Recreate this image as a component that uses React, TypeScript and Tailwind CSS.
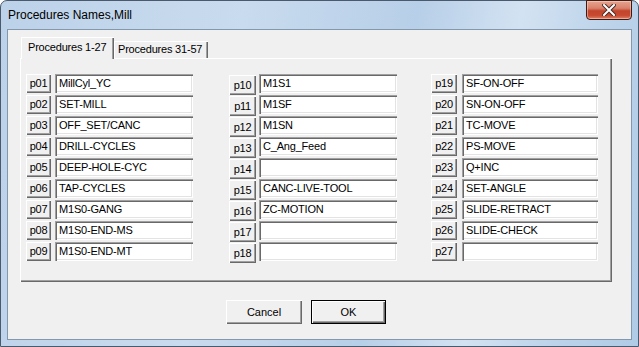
import React from "react";

const col1: [string, string][] = [
  ["p01", "MillCyl_YC"],
  ["p02", "SET-MILL"],
  ["p03", "OFF_SET/CANC"],
  ["p04", "DRILL-CYCLES"],
  ["p05", "DEEP-HOLE-CYC"],
  ["p06", "TAP-CYCLES"],
  ["p07", "M1S0-GANG"],
  ["p08", "M1S0-END-MS"],
  ["p09", "M1S0-END-MT"],
];
const col2: [string, string][] = [
  ["p10", "M1S1"],
  ["p11", "M1SF"],
  ["p12", "M1SN"],
  ["p13", "C_Ang_Feed"],
  ["p14", ""],
  ["p15", "CANC-LIVE-TOOL"],
  ["p16", "ZC-MOTION"],
  ["p17", ""],
  ["p18", ""],
];
const col3: [string, string][] = [
  ["p19", "SF-ON-OFF"],
  ["p20", "SN-ON-OFF"],
  ["p21", "TC-MOVE"],
  ["p22", "PS-MOVE"],
  ["p23", "Q+INC"],
  ["p24", "SET-ANGLE"],
  ["p25", "SLIDE-RETRACT"],
  ["p26", "SLIDE-CHECK"],
  ["p27", ""],
];

const raised =
  "bg-[#f0f0f0] shadow-[inset_1px_1px_0_#ffffff,inset_-1px_-1px_0_#696969,inset_-2px_-2px_0_#a0a0a0]";
const sunken =
  "bg-white shadow-[inset_1px_1px_0_#a0a0a0,inset_2px_2px_0_#696969,inset_-1px_-1px_0_#ffffff,inset_-2px_-2px_0_#e3e3e3]";

function Column({
  rows,
  btnW,
  gap,
  boxW,
  variant,
}: {
  rows: [string, string][];
  btnW: string;
  gap: string;
  boxW: string;
  variant: number;
}) {
  return (
    <div className="flex flex-col gap-[2px]">
      {rows.map(([k, v]) => (
        <div key={k} className={`flex h-[19px] ${gap}`}>
          {variant === 2 ? (
            <div
              className={`${btnW} h-[20px] mt-[1px] ${raised} flex items-center justify-center text-[11px] leading-none text-black tracking-[-0.3px] pt-[1px]`}
            >
              {k}
            </div>
          ) : (
            <div
              className={`${btnW} h-[19px] ${raised} flex items-center justify-center text-[11px] leading-none text-black tracking-[-0.3px]`}
            >
              {k}
            </div>
          )}
          <div
            className={`${boxW} h-[19px] ${sunken} flex items-center pl-[4px] text-[11px] leading-none text-black whitespace-nowrap tracking-[-0.2px]`}
          >
            {v}
          </div>
        </div>
      ))}
    </div>
  );
}

export default function App() {
  return (
    <div className="w-[639px] h-[347px] overflow-hidden bg-white font-['Liberation_Sans',Arial,sans-serif]">
      <div className="w-[639px] h-[347px] flex flex-col border border-[#4a5a6c] rounded-t-[7px] bg-[linear-gradient(100deg,#bcd2e9_0%,#c9dbee_35%,#b7cfe8_60%,#d3e2f2_75%,#bcd3ea_88%,#b0cbe6_100%)]">
        {/* title bar */}
        <div className="h-[28px] flex justify-between shrink-0">
          <div className="pl-[7px] pt-[6px] text-[12px] text-black leading-[16px]">
            Procedures Names,Mill
          </div>
          <div className="-mt-px mr-[6px] w-[46px] h-[20px] rounded-b-[4px] border border-[#3d1a14] bg-[linear-gradient(180deg,#e6a48f_0%,#d8826b_40%,#c3442c_55%,#c84a31_80%,#de8168_100%)] flex items-center justify-center shadow-[inset_0_0_0_1px_rgba(255,220,210,0.5)]">
            <svg width="14" height="12" viewBox="0 0 14 12">
              <path
                d="M2 1 L12 11 M12 1 L2 11"
                stroke="#4a2a24"
                strokeWidth="4"
                strokeLinecap="square"
              />
              <path
                d="M2 1 L12 11 M12 1 L2 11"
                stroke="#ffffff"
                strokeWidth="2"
                strokeLinecap="square"
              />
            </svg>
          </div>
        </div>
        {/* client */}
        <div className="mx-[6px] h-[311px] border border-[#8397ad] bg-[#f0f0f0] flex flex-col pl-[12px] pt-[7px]">
          {/* tabs */}
          <div className="flex items-end h-[21px]">
            <div className="relative z-10 ml-[1px] w-[93px] h-[22px] -mb-[1px] bg-[#f0f0f0] shadow-[inset_1px_1px_0_#ffffff,inset_-1px_0_0_#696969,inset_-2px_0_0_#a0a0a0] pl-[7px] pt-[4px] text-[11px] leading-[13px] text-black whitespace-nowrap tracking-[-0.2px]">
              Procedures 1-27
            </div>
            <div className="w-[94px] h-[17px] bg-[#f0f0f0] shadow-[inset_1px_1px_0_#ffffff,inset_-1px_0_0_#696969,inset_-2px_0_0_#a0a0a0] pl-[4px] pt-[2px] text-[11px] leading-[13px] text-black whitespace-nowrap tracking-[-0.2px]">
              Procedures 31-57
            </div>
          </div>
          {/* panel */}
          <div className="w-[592px] h-[224px] bg-[#f0f0f0] shadow-[inset_1px_1px_0_#ffffff,inset_-1px_-1px_0_#696969,inset_-2px_-2px_0_#a0a0a0] flex pl-[6px] pt-[16px]">
            <Column rows={col1} btnW="w-[25px]" gap="gap-[4px]" boxW="w-[138px]" variant={1} />
            <div className="ml-[36px]">
              <Column rows={col2} btnW="w-[27px]" gap="gap-[3px]" boxW="w-[138px]" variant={2} />
            </div>
            <div className="ml-[34px]">
              <Column rows={col3} btnW="w-[26px]" gap="gap-[5px]" boxW="w-[136px]" variant={1} />
            </div>
          </div>
          {/* buttons */}
          <div className="flex pt-[18px] pl-[206px] gap-[9px]">
            <div className={`w-[76px] h-[24px] ${raised} flex items-center justify-center text-[11px] text-black`}>
              Cancel
            </div>
            <div className="w-[75px] h-[24px] border border-black bg-[#f0f0f0] shadow-[inset_1px_1px_0_#ffffff,inset_-1px_-1px_0_#696969,inset_-2px_-2px_0_#a0a0a0] flex items-center justify-center text-[11px] text-black">
              OK
            </div>
          </div>
        </div>
      </div>
    </div>
  );
}
